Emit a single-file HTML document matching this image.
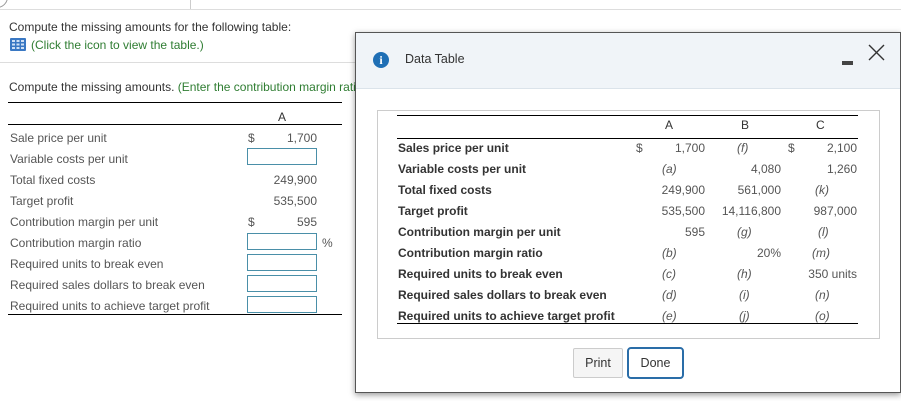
<!DOCTYPE html>
<html><head><style>
*{margin:0;padding:0;box-sizing:border-box}
body{width:901px;height:401px;background:#fff;font-family:"Liberation Sans",Arial,sans-serif;font-size:12px;color:#333;position:relative;overflow:hidden}
.a{position:absolute;white-space:nowrap}
.r{text-align:right}
.hl{position:absolute;height:1px;background:#000}
.in{position:absolute;width:70px;height:17px;border:1px solid #4a8fa8;background:#fff}
.g{color:#555}
.it{font-style:italic;color:#555}
.dl{font-weight:bold;color:#333}
</style></head><body>
<div class="a" style="left:-14px;top:-14px;width:22px;height:22px;border:1px solid #999;border-radius:50%"></div>
<div class="a" style="left:190px;top:0;width:1px;height:9px;background:#ccc"></div>
<div class="a" style="left:0;top:9px;width:901px;height:1px;background:#ddd"></div>
<div class="a" style="left:9px;top:20px">Compute the missing amounts for the following table:</div>
<svg class="a" style="left:10px;top:38px" width="16" height="13" viewBox="0 0 16 13"><rect width="16" height="13" rx="1" fill="#3a78c3"/><g fill="#cfe0f5"><rect x="2" y="2" width="3" height="2"/><rect x="6.5" y="2" width="3" height="2"/><rect x="11" y="2" width="3" height="2"/><rect x="2" y="5.5" width="3" height="2"/><rect x="6.5" y="5.5" width="3" height="2"/><rect x="11" y="5.5" width="3" height="2"/><rect x="2" y="9" width="3" height="2"/><rect x="6.5" y="9" width="3" height="2"/><rect x="11" y="9" width="3" height="2"/></g></svg>
<div class="a" style="left:31px;top:38px;color:#2f7d32">(Click the icon to view the table.)</div>
<div class="a" style="left:0;top:62px;width:355px;height:1px;background:#ddd"></div>
<div class="a" style="left:9px;top:80px">Compute the missing amounts. <span style="color:#2f7d32">(Enter the contribution margin ratio</span></div>
<div class="hl" style="left:8px;top:102px;width:334px"></div>
<div class="a" style="left:278px;top:110px">A</div>
<div class="hl" style="left:8px;top:124px;width:334px"></div>
<div class="a g" style="left:10px;top:131px">Sale price per unit</div>
<div class="a g" style="left:10px;top:152px">Variable costs per unit</div>
<div class="a g" style="left:10px;top:173px">Total fixed costs</div>
<div class="a g" style="left:10px;top:194px">Target profit</div>
<div class="a g" style="left:10px;top:215px">Contribution margin per unit</div>
<div class="a g" style="left:10px;top:236px">Contribution margin ratio</div>
<div class="a g" style="left:10px;top:257px">Required units to break even</div>
<div class="a g" style="left:10px;top:278px">Required sales dollars to break even</div>
<div class="a g" style="left:10px;top:299px">Required units to achieve target profit</div>
<div class="a g" style="left:248px;top:131px">$</div>
<div class="a g r" style="left:257px;width:60px;top:131px">1,700</div>
<div class="in" style="left:247px;top:148px"></div>
<div class="a g r" style="left:257px;width:60px;top:173px">249,900</div>
<div class="a g r" style="left:257px;width:60px;top:194px">535,500</div>
<div class="a g" style="left:248px;top:215px">$</div>
<div class="a g r" style="left:257px;width:60px;top:215px">595</div>
<div class="in" style="left:247px;top:233px"></div>
<div class="a g" style="left:322px;top:236px">%</div>
<div class="in" style="left:247px;top:254px"></div>
<div class="in" style="left:247px;top:275px"></div>
<div class="in" style="left:247px;top:296px"></div>
<div class="hl" style="left:8px;top:314px;width:334px"></div>

<div class="a" style="left:355px;top:32px;width:546px;height:361px;background:#fff;border:1px solid #555;box-shadow:0 2px 6px rgba(0,0,0,.4)">
  <div class="a" style="left:0;top:0;width:544px;height:56px;background:#f0f4f8;border-bottom:1px solid #dbe3ea"></div>
  <div class="a" style="left:17px;top:19px;width:16px;height:16px;border-radius:50%;background:#1f6fb5;color:#fff;font-weight:bold;font-family:'Liberation Serif',serif;font-size:12px;text-align:center;line-height:16px">i</div>
  <div class="a" style="left:49px;top:19px;font-size:12.5px;color:#333">Data Table</div>
  <div class="a" style="left:486px;top:28px;width:11px;height:4px;background:#444"></div>
  <svg class="a" style="left:512px;top:11px" width="17" height="17" viewBox="0 0 17 17"><path d="M1 1L16 16M16 1L1 16" stroke="#333" stroke-width="1.4" fill="none"/></svg>
  <div class="a" style="left:21px;top:77px;width:503px;height:229px;border:1px solid #ccc"></div>
</div>
<div class="hl" style="left:397px;top:115px;width:461px"></div>
<div class="a" style="left:665px;top:118px">A</div>
<div class="a" style="left:741px;top:118px">B</div>
<div class="a" style="left:816px;top:118px">C</div>
<div class="hl" style="left:397px;top:138px;width:461px"></div>
<div class="a dl" style="left:398px;top:141px">Sales price per unit</div>
<div class="a dl" style="left:398px;top:162px">Variable costs per unit</div>
<div class="a dl" style="left:398px;top:183px">Total fixed costs</div>
<div class="a dl" style="left:398px;top:204px">Target profit</div>
<div class="a dl" style="left:398px;top:225px">Contribution margin per unit</div>
<div class="a dl" style="left:398px;top:246px">Contribution margin ratio</div>
<div class="a dl" style="left:398px;top:267px">Required units to break even</div>
<div class="a dl" style="left:398px;top:288px">Required sales dollars to break even</div>
<div class="a dl" style="left:398px;top:309px">Required units to achieve target profit</div>
<div class="a g" style="left:636px;top:141px">$</div>
<div class="a g r" style="left:645px;width:60px;top:141px">1,700</div>
<div class="a it" style="left:737px;top:141px">(f)</div>
<div class="a g" style="left:788px;top:141px">$</div>
<div class="a g r" style="left:797px;width:60px;top:141px">2,100</div>
<div class="a it" style="left:662px;top:162px">(a)</div>
<div class="a g r" style="left:721px;width:60px;top:162px">4,080</div>
<div class="a g r" style="left:797px;width:60px;top:162px">1,260</div>
<div class="a g r" style="left:645px;width:60px;top:183px">249,900</div>
<div class="a g r" style="left:721px;width:60px;top:183px">561,000</div>
<div class="a it" style="left:815px;top:183px">(k)</div>
<div class="a g r" style="left:645px;width:60px;top:204px">535,500</div>
<div class="a g r" style="left:701px;width:80px;top:204px">14,116,800</div>
<div class="a g r" style="left:797px;width:60px;top:204px">987,000</div>
<div class="a g r" style="left:645px;width:60px;top:225px">595</div>
<div class="a it" style="left:737px;top:225px">(g)</div>
<div class="a it" style="left:818px;top:225px">(l)</div>
<div class="a it" style="left:662px;top:246px">(b)</div>
<div class="a g r" style="left:721px;width:60px;top:246px">20%</div>
<div class="a it" style="left:812px;top:246px">(m)</div>
<div class="a it" style="left:662px;top:267px">(c)</div>
<div class="a it" style="left:737px;top:267px">(h)</div>
<div class="a g r" style="left:777px;width:80px;top:267px">350 units</div>
<div class="a it" style="left:662px;top:288px">(d)</div>
<div class="a it" style="left:739px;top:288px">(i)</div>
<div class="a it" style="left:815px;top:288px">(n)</div>
<div class="a it" style="left:662px;top:309px">(e)</div>
<div class="a it" style="left:739px;top:309px">(j)</div>
<div class="a it" style="left:815px;top:309px">(o)</div>
<div class="hl" style="left:397px;top:323px;width:461px"></div>
<div class="a" style="left:573px;top:348px;width:50px;height:30px;border:1px solid #ccc;background:#f5f5f5;border-radius:2px;text-align:center;line-height:28px;font-size:12.5px">Print</div>
<div class="a" style="left:627px;top:347px;width:57px;height:32px;border:2px solid #2a6da8;background:#fff;border-radius:4px;text-align:center;line-height:28px;font-size:12.5px">Done</div>
</body></html>
